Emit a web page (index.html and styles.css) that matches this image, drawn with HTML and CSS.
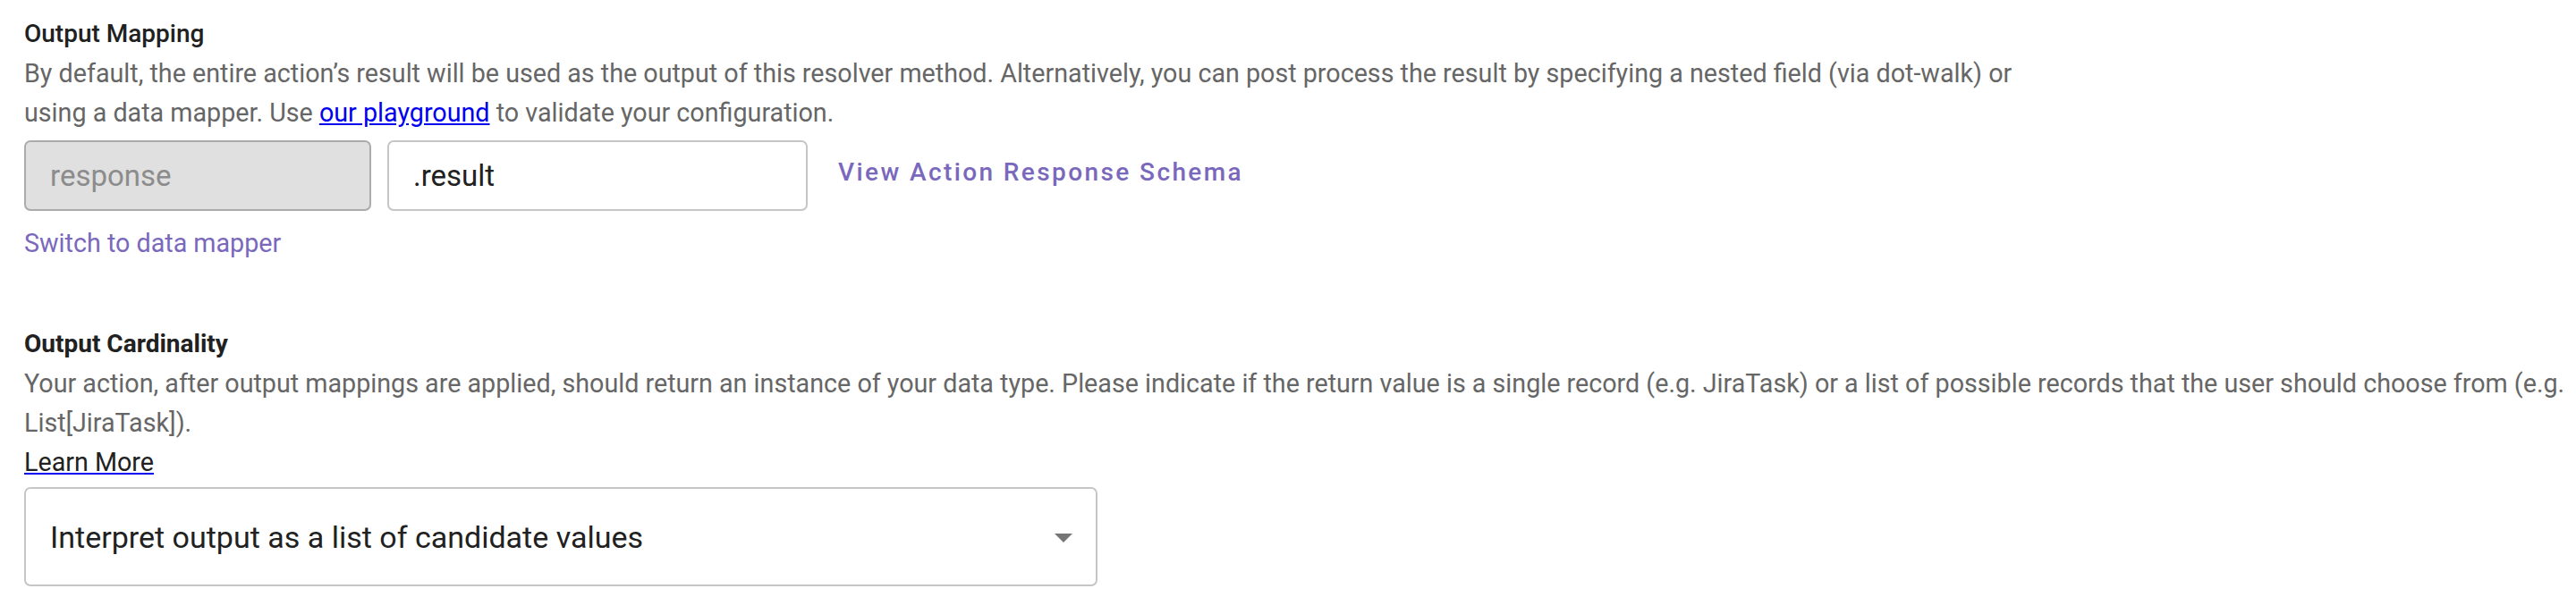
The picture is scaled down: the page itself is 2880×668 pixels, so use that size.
FILE: index.html
```html
<!DOCTYPE html>
<html lang="en">
<head>
<meta charset="utf-8">
<title>Output Mapping</title>
<link rel="stylesheet" href="styles.css">
</head>
<body>
<main class="page">
  <section class="section mapping">
    <h2 class="title title-medium">Output Mapping</h2>
    <p class="desc desc-narrow">By default, the entire action’s result will be used as the output of this resolver method. Alternatively, you can post process the result by specifying a nested field (via dot-walk) or using a data mapper. Use <a class="link" href="#">our playground</a> to validate your configuration.</p>
    <div class="field-row">
      <div class="field field-disabled">response</div>
      <div class="field field-path">.result</div>
      <button class="text-button" type="button">View Action Response Schema</button>
    </div>
    <a class="switch-link" href="#">Switch to data mapper</a>
  </section>

  <section class="section cardinality">
    <h2 class="title title-bold">Output Cardinality</h2>
    <p class="desc">Your action, after output mappings are applied, should return an instance of your data type. Please indicate if the return value is a single record (e.g. JiraTask) or a list of possible records that the user should choose from (e.g. List[JiraTask]).</p>
    <a class="learn-more" href="#">Learn More</a>
    <div class="select">
      <span class="select-value">Interpret output as a list of candidate values</span>
      <svg class="select-arrow" viewBox="0 0 24 24" width="48" height="48" aria-hidden="true"><path d="M7 10l5 5 5-5z"/></svg>
    </div>
  </section>
</main>
</body>
</html>
```

FILE: styles.css
```css
html, body {
  margin: 0;
  padding: 0;
  background: #ffffff;
}

body {
  font-family: Roboto, "Liberation Sans", Arial, sans-serif;
  color: #212121;
}

.page {
  padding: 16px 0 0 27px;
}

.section {
  display: flex;
  flex-direction: column;
  align-items: flex-start;
}

.title {
  margin: 0;
  font-size: 28px;
  line-height: 44px;
  color: #212121;
}

.title-medium {
  font-weight: 500;
}

.title-bold {
  font-weight: 700;
}

.desc {
  margin: 0;
  font-size: 28.7px;
  line-height: 44px;
  color: #666666;
}

.desc-narrow {
  max-width: 2262px;
}

.link {
  color: #0000ee;
  text-decoration: underline;
}

.field-row {
  display: flex;
  align-items: center;
  gap: 18px;
  margin-top: 9px;
}

.field {
  box-sizing: border-box;
  height: 79px;
  display: flex;
  align-items: center;
  padding: 0 0 0 27px;
  border-radius: 7px;
  font-size: 33px;
}

.field-disabled {
  width: 388px;
  background: #e0e0e0;
  border: 2px solid #ababab;
  color: #8c8c8c;
}

.field-path {
  width: 470px;
  background: #ffffff;
  border: 2px solid #c6c6c6;
  color: #212121;
}

.text-button {
  border: 0;
  background: none;
  padding: 0 0 0 16px;
  margin-bottom: 8px;
  font-family: inherit;
  font-size: 28px;
  font-weight: 500;
  letter-spacing: 2.4px;
  color: #7a68bd;
  cursor: pointer;
}

.switch-link {
  margin-top: 14px;
  font-size: 28.7px;
  line-height: 44px;
  color: #7a68bd;
  text-decoration: none;
}

.cardinality {
  margin-top: 69px;
}

.learn-more {
  font-size: 28.7px;
  line-height: 44px;
  color: #212121;
  text-decoration: underline;
  text-decoration-color: #0000ee;
}

.select {
  box-sizing: border-box;
  margin-top: 6px;
  width: 1200px;
  height: 111px;
  border: 2px solid #c6c6c6;
  border-radius: 7px;
  display: flex;
  align-items: center;
  justify-content: space-between;
  padding: 0 12px 0 27px;
}

.select-value {
  font-size: 34px;
  color: #212121;
}

.select-arrow {
  fill: #757575;
}
```
